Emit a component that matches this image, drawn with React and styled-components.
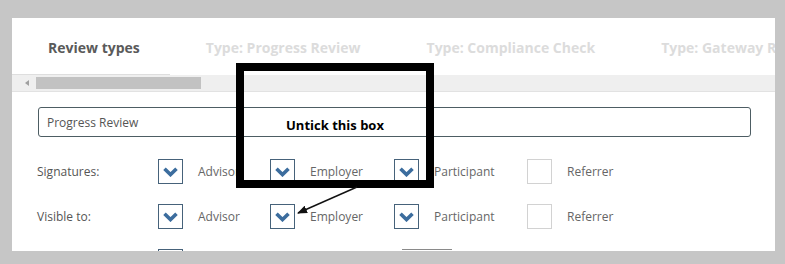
import React from 'react'
import styled, { createGlobalStyle } from 'styled-components'

const GlobalStyle = createGlobalStyle`
  html, body {
    margin: 0;
    padding: 0;
    background: #c6c6c6;
    font-family: "Open Sans", "DejaVu Sans", sans-serif;
  }
`

const tabs = ['Review types', 'Type: Progress Review', 'Type: Compliance Check', 'Type: Gateway Review']

const widths = [112, 124, 133, 100]

const rows = [
  { label: 'Signatures:', items: [['Advisor', true], ['Employer', true], ['Participant', true], ['Referrer', false]] },
  { label: 'Visible to:', items: [['Advisor', true], ['Employer', true], ['Participant', true], ['Referrer', false]] },
]

const Chevron = () => (
  <svg width="15" height="10" viewBox="0 0 15 10">
    <path d="M1.5 1.8 L7.5 7.6 L13.5 1.8" fill="none" stroke="#3c6d9e" strokeWidth="3.6" />
  </svg>
)

const App = () => {
  return (
    <Page>
      <GlobalStyle />
      <Panel>
        <TabBar>
          {tabs.map((t, i) => (
            <Tab key={t} active={i === 0}>{t}</Tab>
          ))}
        </TabBar>
        <Scrollbar>
          <ScrollArrow />
          <Thumb />
        </Scrollbar>
        <Form>
          <NameInput>Progress Review</NameInput>
          {rows.map((r) => (
            <Row key={r.label}>
              <RowLabel>{r.label}</RowLabel>
              {r.items.map(([name, checked], i) => (
                <Option key={name} w={widths[i]}>
                  <Box checked={checked}>{checked && <Chevron />}</Box>
                  <OptionText>{name}</OptionText>
                </Option>
              ))}
            </Row>
          ))}
          <Row>
            <RowLabel />
            <Box checked />
            <Button />
          </Row>
        </Form>
      </Panel>

      <Callout>Untick this box</Callout>
      <Arrow width="785" height="264" viewBox="0 0 785 264">
        <defs>
          <marker id="head" markerWidth="10" markerHeight="8" refX="9" refY="4" orient="auto" markerUnits="userSpaceOnUse">
            <path d="M0 0 L10 4 L0 8 Z" fill="#111" />
          </marker>
        </defs>
        <line x1="357" y1="187" x2="298" y2="213" stroke="#111" strokeWidth="1.4" markerEnd="url(#head)" />
      </Arrow>
    </Page>
  )
}

export default App

const Page = styled.div`
  position: relative;
  width: 785px;
  height: 264px;
  padding: 18px 10px 13px 12px;
  box-sizing: border-box;
  background: #c6c6c6;
  overflow: hidden;
`
const Panel = styled.div`
  width: 763px;
  height: 233px;
  background: #fff;
  overflow: hidden;
`
const TabBar = styled.div`
  display: flex;
  height: 57px;
  white-space: nowrap;
`
const Tab = styled.div`
  flex: none;
  display: flex;
  align-items: center;
  padding: 3px 30px 0 36px;
  font-size: 14px;
  font-weight: 700;
  color: ${(p) => (p.active ? '#5a5a5a' : '#dcdcdc')};
  border-bottom: 1px solid ${(p) => (p.active ? '#dedede' : 'transparent')};
`
const Scrollbar = styled.div`
  display: flex;
  align-items: center;
  gap: 7px;
  height: 16px;
  padding-left: 13px;
  background: #efefef;
  border-bottom: 1px solid #e2e2e2;
`
const ScrollArrow = styled.div`
  width: 0;
  height: 0;
  border-top: 3px solid transparent;
  border-bottom: 3px solid transparent;
  border-right: 4px solid #a0a0a0;
`
const Thumb = styled.div`
  width: 165px;
  height: 12px;
  background: #c2c2c2;
`
const Form = styled.div`
  padding: 15px 0 0 25px;
  display: flex;
  flex-direction: column;
`
const NameInput = styled.div`
  width: 703px;
  height: 28px;
  margin-left: 1px;
  border: 1px solid #4d5d63;
  border-radius: 3px;
  display: flex;
  align-items: center;
  padding-left: 8px;
  font-size: 12px;
  color: #555;
  margin-bottom: 22px;
`
const Row = styled.div`
  display: flex;
  align-items: center;
  height: 25px;
  margin-bottom: 20px;
`
const RowLabel = styled.div`
  width: 121px;
  font-size: 12px;
  color: #555;
`
const Option = styled.div`
  flex: none;
  display: flex;
  align-items: center;
  width: ${(p) => p.w}px;
`
const Box = styled.div`
  width: 23px;
  height: 23px;
  border: 1px solid ${(p) => (p.checked ? '#46627a' : '#d2d2d2')};
  display: flex;
  align-items: center;
  justify-content: center;
  margin-right: 15px;
`
const OptionText = styled.div`
  font-size: 12px;
  color: #666;
`
const Button = styled.div`
  width: 50px;
  height: 24px;
  margin-left: 204px;
  border-top: 1px solid #8a8a8a;
`
const Callout = styled.div`
  position: absolute;
  left: 236px;
  top: 63px;
  width: 182px;
  height: 107px;
  border: 8px solid #000;
  display: flex;
  align-items: center;
  justify-content: center;
  padding-bottom: 2px;
  box-sizing: content-box;
  font-size: 13px;
  font-weight: 700;
  color: #000;
`
const Arrow = styled.svg`
  position: absolute;
  left: 0;
  top: 0;
  pointer-events: none;
`
